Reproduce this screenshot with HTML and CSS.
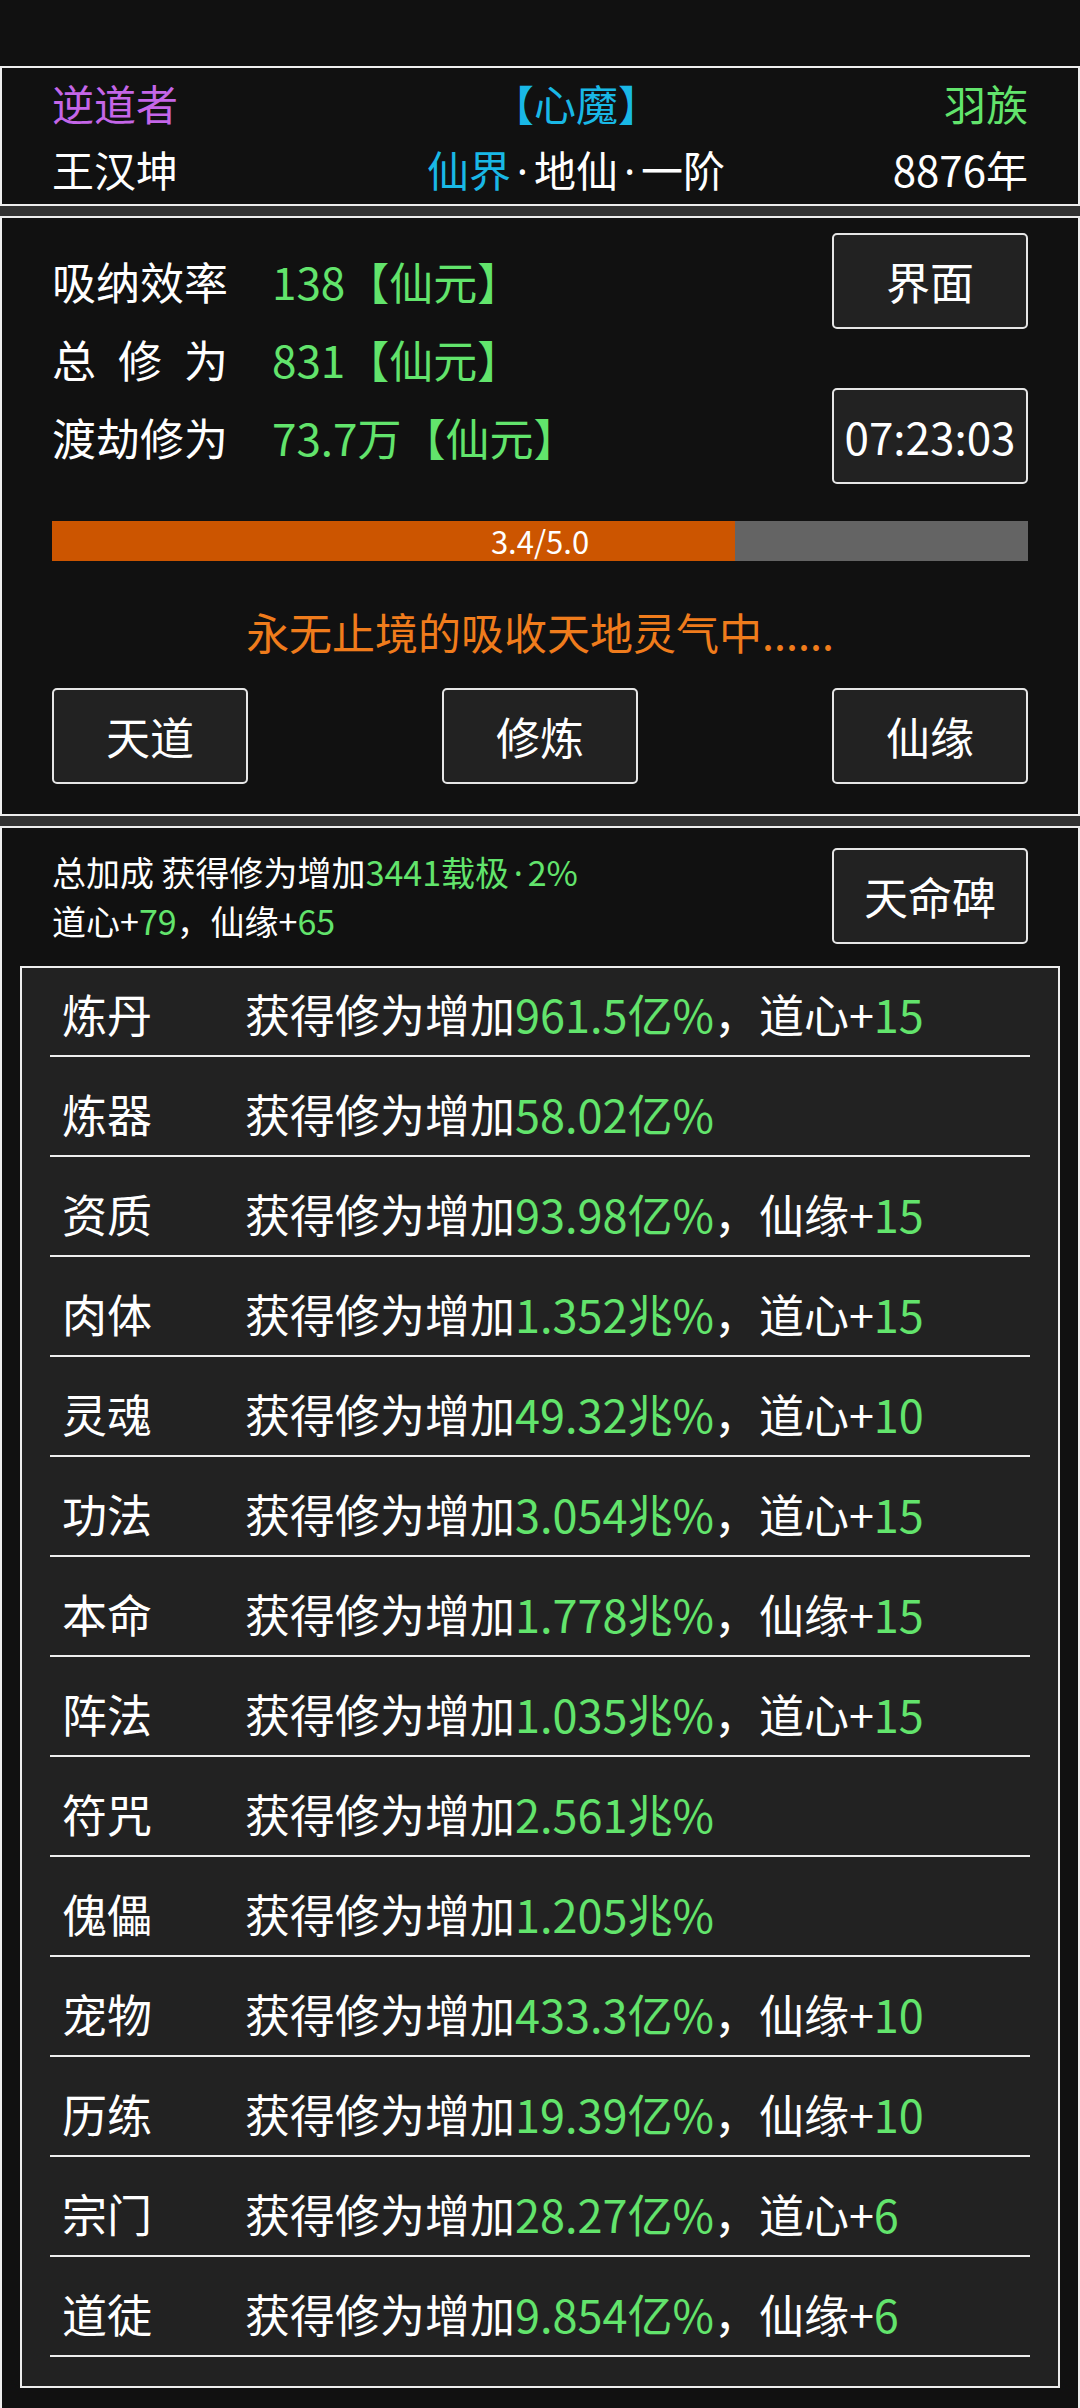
FILE: index.html
```html
<!DOCTYPE html>
<html lang="zh-CN">
<head>
    <meta charset="UTF-8">
    <meta name="viewport" content="width=device-width, initial-scale=1.0">
    <title>修仙</title>
    <link rel="stylesheet" href="styles.css">
</head>
<body>

<div class="statusbar"></div>

<section class="panel panel-info">
    <span class="purple">逆道者</span>
    <span class="cyan mid">【心魔】</span>
    <span class="green end">羽族</span>
    <span>王汉坤</span>
    <span class="mid"><span class="cyan">仙界</span><span class="dot">·</span>地仙<span class="dot">·</span>一阶</span>
    <span class="end">8876年</span>
</section>

<section class="panel panel-cultivate">
    <div class="stats-top">
        <div class="stats">
            <div class="stat"><span class="stat-label">吸纳效率</span><span class="green">138【仙元】</span></div>
            <div class="stat"><span class="stat-label spaced">总修为</span><span class="green">831【仙元】</span></div>
            <div class="stat"><span class="stat-label">渡劫修为</span><span class="green">73.7万【仙元】</span></div>
        </div>
        <div class="side-buttons">
            <button class="btn">界面</button>
            <button class="btn">07:23:03</button>
        </div>
    </div>

    <div class="progress">
        <div class="progress-fill" style="width: 70%"></div>
        <span class="progress-text">3.4/5.0</span>
    </div>

    <p class="status-text">永无止境的吸收天地灵气中......</p>

    <div class="action-buttons">
        <button class="btn">天道</button>
        <button class="btn">修炼</button>
        <button class="btn">仙缘</button>
    </div>
</section>

<section class="panel panel-bonus">
    <div class="bonus-head">
        <div class="bonus-total">
            <div>总加成 获得修为增加<span class="green">3441载极<span class="dot">·</span>2%</span></div>
            <div>道心+<span class="green">79</span>，仙缘+<span class="green">65</span></div>
        </div>
        <button class="btn">天命碑</button>
    </div>

    <div class="bonus-list">
        <div class="bonus-row"><span class="bonus-name">炼丹</span><span>获得修为增加<span class="green">961.5亿%</span>，道心+<span class="green">15</span></span></div>
        <div class="bonus-row"><span class="bonus-name">炼器</span><span>获得修为增加<span class="green">58.02亿%</span></span></div>
        <div class="bonus-row"><span class="bonus-name">资质</span><span>获得修为增加<span class="green">93.98亿%</span>，仙缘+<span class="green">15</span></span></div>
        <div class="bonus-row"><span class="bonus-name">肉体</span><span>获得修为增加<span class="green">1.352兆%</span>，道心+<span class="green">15</span></span></div>
        <div class="bonus-row"><span class="bonus-name">灵魂</span><span>获得修为增加<span class="green">49.32兆%</span>，道心+<span class="green">10</span></span></div>
        <div class="bonus-row"><span class="bonus-name">功法</span><span>获得修为增加<span class="green">3.054兆%</span>，道心+<span class="green">15</span></span></div>
        <div class="bonus-row"><span class="bonus-name">本命</span><span>获得修为增加<span class="green">1.778兆%</span>，仙缘+<span class="green">15</span></span></div>
        <div class="bonus-row"><span class="bonus-name">阵法</span><span>获得修为增加<span class="green">1.035兆%</span>，道心+<span class="green">15</span></span></div>
        <div class="bonus-row"><span class="bonus-name">符咒</span><span>获得修为增加<span class="green">2.561兆%</span></span></div>
        <div class="bonus-row"><span class="bonus-name">傀儡</span><span>获得修为增加<span class="green">1.205兆%</span></span></div>
        <div class="bonus-row"><span class="bonus-name">宠物</span><span>获得修为增加<span class="green">433.3亿%</span>，仙缘+<span class="green">10</span></span></div>
        <div class="bonus-row"><span class="bonus-name">历练</span><span>获得修为增加<span class="green">19.39亿%</span>，仙缘+<span class="green">10</span></span></div>
        <div class="bonus-row"><span class="bonus-name">宗门</span><span>获得修为增加<span class="green">28.27亿%</span>，道心+<span class="green">6</span></span></div>
        <div class="bonus-row"><span class="bonus-name">道徒</span><span>获得修为增加<span class="green">9.854亿%</span>，仙缘+<span class="green">6</span></span></div>
    </div>
</section>

</body>
</html>
```

FILE: styles.css
```css
body {
    margin: 0;
    background-color: #333;
    color: #fff;
    font-family: "Noto Sans CJK SC", "Noto Sans", sans-serif;
}
.statusbar {
    height: 66px;
    background-color: #111;
}
.panel {
    box-sizing: border-box;
    background-color: #111;
    border: 2px solid #eee;
}
.panel + .panel {
    margin-top: 10px;
}

.green { color: #62e46c; }
.purple { color: #c466e8; }
.cyan { color: #19b8e6; }

/* 半角的间隔点 */
.dot {
    font-family: "Noto Sans", sans-serif;
    margin: 0 0.14em;
}

/* 角色信息 */
.panel-info {
    height: 140px;
    padding: 3px 50px 0;
    display: grid;
    grid-template-columns: 359px 330px 1fr;
    font-size: 42px;
    line-height: 64px;
}
.panel-info .mid { text-align: center; }
.panel-info .end { text-align: right; }

.btn {
    box-sizing: border-box;
    width: 196px;
    height: 96px;
    padding: 0;
    font-family: inherit;
    font-size: 44px;
    color: #fff;
    background-color: #222;
    border: 2px solid #e6e6e6;
    border-radius: 5px;
}

/* 修炼 */
.panel-cultivate {
    padding: 15px 50px 30px;
}
.stats-top {
    display: flex;
    justify-content: space-between;
    align-items: center;
}
.stats {
    font-size: 44px;
    line-height: 78px;
}
.stat {
    display: flex;
}
.stat-label {
    width: 220px;
}
.spaced {
    letter-spacing: 0.5em;
}
.side-buttons {
    display: flex;
    flex-direction: column;
    gap: 59px;
}
.progress {
    position: relative;
    height: 40px;
    margin-top: 37px;
    background-color: #646464;
}
.progress-fill {
    height: 100%;
    background-color: #cc5500;
}
.progress-text {
    position: absolute;
    inset: 0;
    text-align: center;
    font-size: 31px;
    line-height: 40px;
}
.status-text {
    margin: 40px 0 0;
    text-align: center;
    font-size: 43px;
    line-height: 60px;
    color: #f07c1c;
}
.action-buttons {
    display: flex;
    justify-content: space-between;
    margin-top: 27px;
}

/* 加成 */
.panel-bonus {
    padding: 20px 18px 20px;
    border-bottom: none;
}
.bonus-head {
    display: flex;
    justify-content: space-between;
    align-items: center;
    padding: 0 32px;
}
.bonus-total {
    font-size: 34px;
    line-height: 47px;
}
.bonus-list {
    margin-top: 22px;
    padding: 0 28px 29px;
    background-color: #222;
    border: 2px solid #eee;
    overflow: hidden;
}
.bonus-row {
    box-sizing: border-box;
    height: 100px;
    padding: 26px 0 0 12px;
    display: flex;
    font-size: 45px;
    line-height: 62px;
    border-bottom: 2px solid #eee;
}
.bonus-row:first-child {
    margin-top: -11px;
}
.bonus-name {
    width: 183px;
    flex-shrink: 0;
}
```
